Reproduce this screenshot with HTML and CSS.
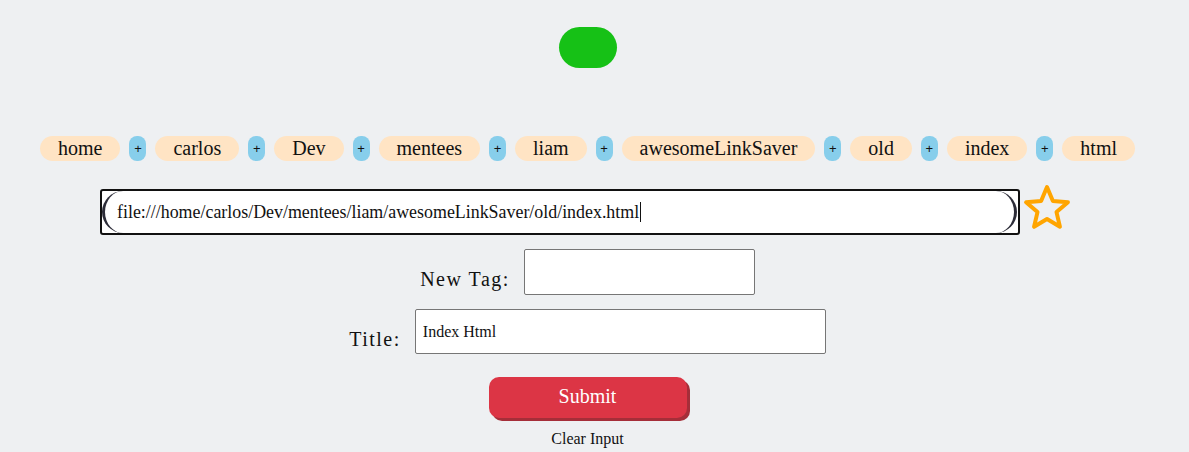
FILE: index.html
```html
<!DOCTYPE html>
<html lang="en">
<head>
<meta charset="utf-8">
<title>awesomeLinkSaver</title>
<link rel="stylesheet" href="styles.css">
</head>
<body>
<main class="app">
  <div class="status-pill"></div>
  <div class="tags">
    <span class="tag">home</span><button class="add">+</button>
    <span class="tag">carlos</span><button class="add">+</button>
    <span class="tag">Dev</span><button class="add">+</button>
    <span class="tag">mentees</span><button class="add">+</button>
    <span class="tag">liam</span><button class="add">+</button>
    <span class="tag">awesomeLinkSaver</span><button class="add">+</button>
    <span class="tag">old</span><button class="add">+</button>
    <span class="tag">index</span><button class="add">+</button>
    <span class="tag">html</span>
  </div>
  <div class="url-row">
    <div class="url-box">
      <div class="url-field"><span class="url-text">file:///home/carlos/Dev/mentees/liam/awesomeLinkSaver/old/index.html</span><span class="caret"></span></div>
    </div>
    <svg class="star" width="50" height="50" viewBox="0 0 50 50" aria-label="favourite">
      <polygon points="25,3 30.88,16.91 45.92,18.2 34.51,28.09 37.93,42.8 25,35 12.07,42.8 15.49,28.09 4.08,18.2 19.12,16.91" fill="none" stroke="#ffa500" stroke-width="4" stroke-linejoin="round"/>
    </svg>
  </div>
  <div class="field-row">
    <label class="field-label" for="newtag">New Tag:</label>
    <input class="field-input tag-input" id="newtag" type="text">
  </div>
  <div class="field-row">
    <label class="field-label" for="title">Title:</label>
    <input class="field-input title-input" id="title" type="text" value="Index Html">
  </div>
  <button class="submit">Submit</button>
  <div class="clear">Clear Input</div>
</main>
</body>
</html>
```
FILE: styles.css
```css
html, body {
  margin: 0;
  padding: 0;
  background: #eef0f2;
}

body {
  font-family: "Liberation Serif", "Times New Roman", serif;
  color: #111;
}

.app {
  width: 1175px;
  display: flex;
  flex-direction: column;
  align-items: center;
  padding-top: 27px;
}

.status-pill {
  width: 58px;
  height: 41px;
  border-radius: 21px;
  background: #16c116;
}

.tags {
  margin-top: 68px;
  display: flex;
  gap: 9px;
  height: 25px;
}

.tag {
  display: block;
  background: #ffe4c4;
  padding: 0 18px;
  border-radius: 13px;
  font-size: 20px;
  line-height: 25px;
  height: 25px;
}

.add {
  width: 17px;
  height: 25px;
  padding: 0;
  border: none;
  border-radius: 8px;
  background: #87ceeb;
  font-family: "Liberation Sans", Arial, sans-serif;
  font-size: 13px;
  color: #111;
  line-height: 25px;
}

.url-row {
  margin-top: 28px;
  margin-right: 3px;
  display: flex;
  align-items: flex-start;
  gap: 2px;
}

.url-box {
  width: 916px;
  height: 42px;
  border: 2px solid #111;
  border-radius: 3px;
  background: #fff;
}

.url-field {
  height: 42px;
  box-sizing: border-box;
  border-left: 3px solid #2c2c38;
  border-right: 3px solid #2c2c38;
  border-radius: 21px;
  background: #fff;
  padding-left: 12px;
  margin-right: 1px;
  display: flex;
  align-items: center;
  font-size: 17.9px;
  color: #111;
}

.caret {
  display: inline-block;
  width: 1px;
  height: 20px;
  background: #111;
  margin-left: 1px;
}

.star {
  margin-top: -5px;
}

.field-row {
  margin-top: 14px;
  display: flex;
  align-items: center;
  gap: 14px;
}

.field-label {
  font-size: 20px;
  letter-spacing: 1.5px;
  padding-top: 15px;
  line-height: 23px;
}

.field-input {
  box-sizing: border-box;
  border: 1px solid #767676;
  border-radius: 2px;
  background: #fff;
  font-family: "Liberation Serif", "Times New Roman", serif;
  font-size: 16px;
  color: #111;
  padding: 0 7px;
  margin: 0;
}

.tag-input {
  width: 231px;
  height: 46px;
}

.title-input {
  width: 411px;
  height: 45px;
}

.submit {
  margin-top: 23px;
  width: 198px;
  height: 41px;
  border: none;
  border-radius: 10px;
  background: #dc3545;
  box-shadow: 3px 3px 0 #a52e39;
  color: #fff;
  font-family: "Liberation Serif", "Times New Roman", serif;
  font-size: 20px;
  padding: 0 0 2px;
}

.clear {
  margin-top: 12px;
  font-size: 16px;
  line-height: 18px;
}
```
